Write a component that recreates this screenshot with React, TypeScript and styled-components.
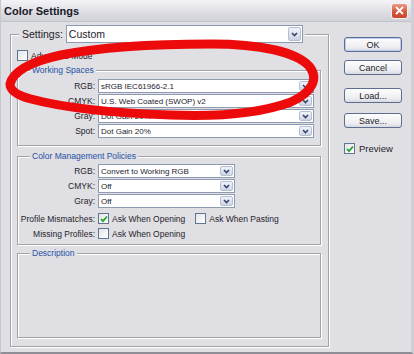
import React from 'react'
import styled, { createGlobalStyle } from 'styled-components'

const GlobalStyle = createGlobalStyle`
  html, body {
    margin: 0;
    padding: 0;
    background: #e0dfe3;
  }
  body {
    font-family: "Liberation Sans", Arial, sans-serif;
    color: #24242c;
  }
`

const Window = styled.div`
  position: relative;
  width: 414px;
  height: 354px;
  box-sizing: border-box;
  display: flex;
  flex-direction: column;
  background: #e0dfe3;
  border-left: 1px solid #c6c6ce;
  border-right: 3px solid #cfcfd6;
  border-bottom: 2px solid #8e8e96;
  overflow: hidden;
`

const TitleBar = styled.div`
  flex-shrink: 0;
  height: 21px;
  display: flex;
  align-items: center;
  justify-content: space-between;
  padding: 0 3px 0 3px;
  background: linear-gradient(#f4f4f8, #dcdce2 60%, #d2d2da);
  border-bottom: 1px solid #c2c2ca;
`

const Title = styled.span`
  font-weight: bold;
  font-size: 11px;
  color: #1a1a28;
`

const CloseButton = styled.div`
  width: 17px;
  height: 16px;
  box-sizing: border-box;
  display: flex;
  align-items: center;
  justify-content: center;
  border: 1px solid #f6f0ee;
  border-radius: 3px;
  background: linear-gradient(#eb9a86, #d5583c 55%, #c9462c);
`

const Body = styled.div`
  flex: 1;
  display: flex;
  gap: 15px;
  padding: 3px 0 5px 9px;
`

const Group = styled.fieldset<{ $fill?: boolean }>`
  margin: 0;
  min-inline-size: 0;
  box-sizing: border-box;
  border: 1px solid #a2a2a8;
  box-shadow: inset 1px 1px 0 #fff, 1px 1px 0 #fff;
  display: flex;
  flex-direction: column;
  flex: ${p => (p.$fill ? 1 : 'none')};
`

const OuterGroup = styled(Group)`
  flex: 0 0 319px;
  padding: 0 7px 8px 6px;
`

const InnerGroup = styled(Group)<{ $gapTop: number; $padTop: number; $padBottom: number }>`
  margin-top: ${p => p.$gapTop}px;
  padding: ${p => p.$padTop}px 6px ${p => p.$padBottom}px 0;
`

const SettingsLegend = styled.legend`
  display: flex;
  align-items: center;
  margin-left: 2px;
  padding: 0 2px 0 3px;
  background: #e0dfe3;
`

const SettingsLabel = styled.span`
  font-size: 10.5px;
  margin-right: 3px;
`

const GroupLegend = styled.legend`
  margin-left: 12px;
  padding: 0 2px;
  font-size: 8.5px;
  line-height: 11px;
  color: #2452a4;
  background: #e0dfe3;
`

const Rows = styled.div<{ $gap: number }>`
  display: grid;
  grid-template-columns: 77px 1fr;
  column-gap: 3px;
  row-gap: ${p => p.$gap}px;
  align-items: center;
`

const FieldLabel = styled.span<{ $top?: number }>`
  font-size: 8.5px;
  text-align: right;
  white-space: nowrap;
  margin-top: ${p => p.$top ?? 0}px;
`

const SelectBox = styled.div<{ $width?: number; $height: number }>`
  display: flex;
  height: ${p => p.$height}px;
  width: ${p => (p.$width ? `${p.$width}px` : 'auto')};
  box-sizing: border-box;
  background: #fff;
  border: 1px solid #8e9ab0;
`

const SelectText = styled.span<{ $size: number }>`
  flex: 1;
  padding-left: 2px;
  font-size: ${p => p.$size}px;
  display: flex;
  align-items: center;
  white-space: nowrap;
  overflow: hidden;
`

const SelectArrow = styled.span`
  width: 13px;
  margin: 1px;
  box-sizing: border-box;
  display: flex;
  align-items: center;
  justify-content: center;
  border: 1px solid #b5bfd3;
  border-radius: 2px;
  background: linear-gradient(#f1f3f9, #cdd4e4);
`

const CheckLine = styled.div<{ $top?: number }>`
  display: flex;
  align-items: center;
  gap: 3px;
  margin-top: ${p => p.$top ?? 0}px;
  font-size: 8.5px;
`

const CheckGroup = styled.div<{ $top?: number }>`
  display: flex;
  align-items: center;
  gap: 10px;
  margin-top: ${p => p.$top ?? 0}px;
`

const Box = styled.span`
  width: 11px;
  height: 11px;
  box-sizing: border-box;
  flex-shrink: 0;
  display: flex;
  align-items: center;
  justify-content: center;
  background: linear-gradient(135deg, #e4e4ea, #fff);
  border: 1px solid #5f7592;
`

const ButtonColumn = styled.div`
  width: 58px;
  display: flex;
  flex-direction: column;
  padding-top: 12px;
`

const DialogButton = styled.div<{ $top: number; $default?: boolean }>`
  height: 15px;
  margin-top: ${p => p.$top}px;
  box-sizing: border-box;
  display: flex;
  align-items: center;
  justify-content: center;
  font-size: 9px;
  color: #1c1c28;
  border: 1px solid #5d6e8f;
  border-radius: 3px;
  background: linear-gradient(#fdfdfe, #eeeef2 70%, #d8d8e2);
  box-shadow: ${p => (p.$default ? 'inset 0 0 0 1px #b9cdf2' : 'none')};
`

const PreviewLine = styled(CheckLine)`
  font-size: 9.5px;
  gap: 4px;
`

const Annotation = styled.svg`
  position: absolute;
  left: 0;
  top: 0;
  pointer-events: none;
`

function Chevron() {
  return (
    <svg width="7" height="5" viewBox="0 0 7 5">
      <polyline points="1,1 3.5,3.6 6,1" fill="none" stroke="#34466b" strokeWidth="1.6" />
    </svg>
  )
}

function Select({ value, width, height = 14, size = 8 }: { value: string; width?: number; height?: number; size?: number }) {
  return (
    <SelectBox $width={width} $height={height}>
      <SelectText $size={size}>{value}</SelectText>
      <SelectArrow>
        <Chevron />
      </SelectArrow>
    </SelectBox>
  )
}

function Check({ checked }: { checked?: boolean }) {
  return (
    <Box>
      {checked && (
        <svg width="8" height="8" viewBox="0 0 8 8">
          <polyline points="1,4 3,6.2 7,1.5" fill="none" stroke="#26a326" strokeWidth="1.8" />
        </svg>
      )}
    </Box>
  )
}

const workingSpaces = [
  ['RGB:', 'sRGB IEC61966-2.1'],
  ['CMYK:', 'U.S. Web Coated (SWOP) v2'],
  ['Gray:', 'Dot Gain 20%'],
  ['Spot:', 'Dot Gain 20%'],
]

const policies = [
  ['RGB:', 'Convert to Working RGB'],
  ['CMYK:', 'Off'],
  ['Gray:', 'Off'],
]

export default function App() {
  return (
    <>
      <GlobalStyle />
      <Window>
        <TitleBar>
          <Title>Color Settings</Title>
          <CloseButton>
            <svg width="9" height="9" viewBox="0 0 9 9">
              <path d="M1.5 1.5 L7.5 7.5 M7.5 1.5 L1.5 7.5" stroke="#fff" strokeWidth="1.8" strokeLinecap="round" />
            </svg>
          </CloseButton>
        </TitleBar>

        <Body>
          <OuterGroup>
            <SettingsLegend>
              <SettingsLabel>Settings:</SettingsLabel>
              <Select value="Custom" width={237} height={18} size={10.5} />
            </SettingsLegend>

            <CheckLine $top={7}>
              <Check />
              <span>Advanced Mode</span>
            </CheckLine>

            <InnerGroup $gapTop={4} $padTop={3} $padBottom={7}>
              <GroupLegend>Working Spaces</GroupLegend>
              <Rows $gap={1}>
                {workingSpaces.map(([label, value]) => (
                  <React.Fragment key={label}>
                    <FieldLabel>{label}</FieldLabel>
                    <Select value={value} />
                  </React.Fragment>
                ))}
              </Rows>
            </InnerGroup>

            <InnerGroup $gapTop={5} $padTop={2} $padBottom={5}>
              <GroupLegend>Color Management Policies</GroupLegend>
              <Rows $gap={1}>
                {policies.map(([label, value]) => (
                  <React.Fragment key={label}>
                    <FieldLabel>{label}</FieldLabel>
                    <Select value={value} width={137} />
                  </React.Fragment>
                ))}
                <FieldLabel $top={4}>Profile Mismatches:</FieldLabel>
                <CheckGroup $top={4}>
                  <CheckLine>
                    <Check checked />
                    <span>Ask When Opening</span>
                  </CheckLine>
                  <CheckLine>
                    <Check />
                    <span>Ask When Pasting</span>
                  </CheckLine>
                </CheckGroup>
                <FieldLabel $top={3}>Missing Profiles:</FieldLabel>
                <CheckLine $top={3}>
                  <Check />
                  <span>Ask When Opening</span>
                </CheckLine>
              </Rows>
            </InnerGroup>

            <InnerGroup $gapTop={3} $padTop={0} $padBottom={0} $fill>
              <GroupLegend>Description</GroupLegend>
            </InnerGroup>
          </OuterGroup>

          <ButtonColumn>
            <DialogButton $top={0} $default>OK</DialogButton>
            <DialogButton $top={8}>Cancel</DialogButton>
            <DialogButton $top={13}>Load...</DialogButton>
            <DialogButton $top={10}>Save...</DialogButton>
            <PreviewLine $top={15}>
              <Check checked />
              <span>Preview</span>
            </PreviewLine>
          </ButtonColumn>
        </Body>

        <Annotation width="414" height="354" viewBox="0 0 414 354">
          <path
            d="M9 84 C12 72, 28 62, 60 55 C100 47, 160 44, 210 44 C260 44, 295 52, 308 66 C318 78, 312 92, 290 102 C260 113, 220 117, 170 115 C110 113, 60 107, 30 99 C15 95, 9 90, 9 84 Z"
            fill="none"
            stroke="#ec0a0a"
            strokeWidth="9"
            strokeLinejoin="round"
          />
        </Annotation>
      </Window>
    </>
  )
}
